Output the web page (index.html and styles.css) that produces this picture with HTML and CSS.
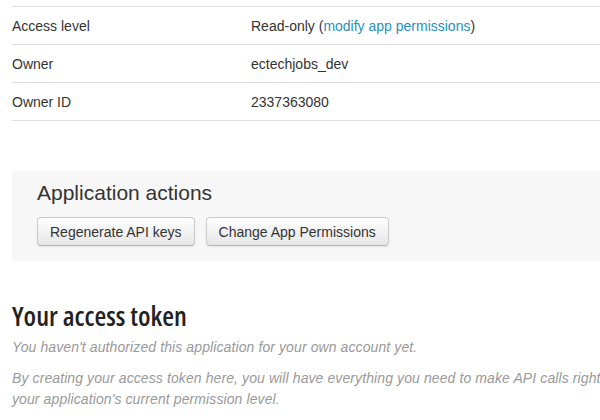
FILE: index.html
```html
<!DOCTYPE html>
<html>
<head>
<meta charset="utf-8">
<link rel="stylesheet" href="styles.css">
</head>
<body>
<div class="page">
  <div class="details">
    <div class="row"><div class="label">Access level</div><div class="value">Read-only (<a href="#">modify app permissions</a>)</div></div>
    <div class="row"><div class="label">Owner</div><div class="value">ectechjobs_dev</div></div>
    <div class="row"><div class="label">Owner ID</div><div class="value">2337363080</div></div>
  </div>
  <div class="actions">
    <h3 class="actions-title">Application actions</h3>
    <div class="buttons">
      <button class="btn">Regenerate API keys</button>
      <button class="btn">Change App Permissions</button>
    </div>
  </div>
  <h2 class="token-title">Your access token</h2>
  <p class="muted">You haven't authorized this application for your own account yet.</p>
  <p class="muted">By creating your access token here, you will have everything you need to make API calls right<br>your application's current permission level.</p>
</div>
</body>
</html>
```
FILE: styles.css
```css
html, body {
  margin: 0;
  padding: 0;
  background: #fff;
  overflow: hidden;
}
body {
  font-family: "Liberation Sans", Arial, sans-serif;
  font-size: 14px;
  line-height: 18px;
  color: #333;
}
.page {
  margin-left: 12px;
  width: 640px;
  padding-top: 6px;
}
.details {
  border-bottom: 1px solid #ddd;
}
.row {
  display: flex;
  border-top: 1px solid #ddd;
  padding: 10px 0 9px;
}
.label {
  width: 239px;
}
.value a {
  color: #2a8fc0;
  text-decoration: none;
}
.actions {
  margin-top: 50px;
  background: #f7f7f7;
  padding: 10px 25px 15px;
}
.actions-title {
  margin: 0 0 12px;
  font-weight: normal;
  font-size: 21px;
  line-height: 24px;
  color: #333;
}
.buttons {
  display: flex;
  gap: 11px;
}
.btn {
  font-family: "Liberation Sans", Arial, sans-serif;
  font-size: 14px;
  line-height: 18px;
  color: #333;
  padding: 5px 12px 4px;
  border: 1px solid #ccc;
  border-bottom-color: #b3b3b3;
  border-radius: 4px;
  background: linear-gradient(#ffffff, #e6e6e6);
  box-shadow: 0 1px 2px rgba(0,0,0,.08);
}
.token-title {
  margin: 40px 0 6px;
  font-family: "Open Sans", sans-serif;
  font-stretch: 75%;
  font-weight: 600;
  font-size: 27px;
  line-height: 30px;
  color: #222;
}
.muted {
  margin: 0 0 10px;
  font-style: italic;
  color: #999;
  line-height: 21px;
  letter-spacing: 0.1px;
}
```
